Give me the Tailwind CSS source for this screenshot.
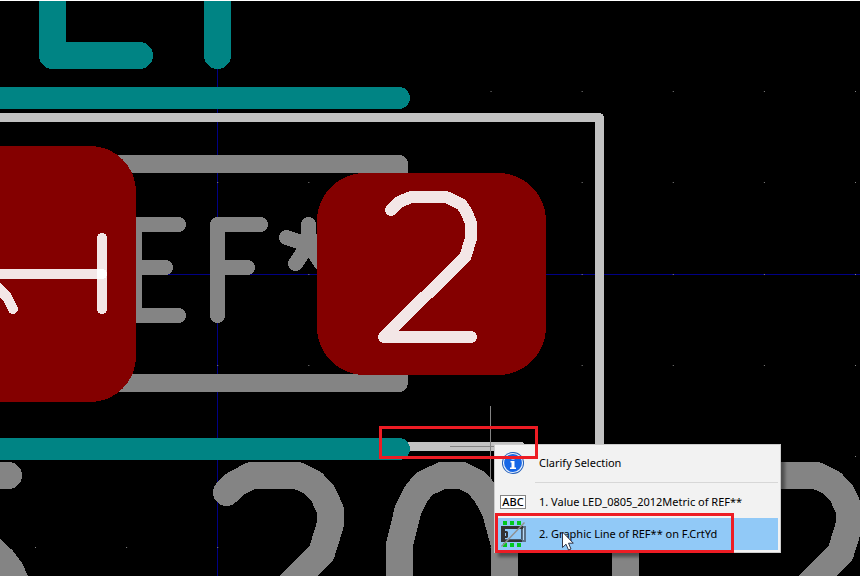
<!DOCTYPE html>
<html lang="en">
<head>
<meta charset="utf-8">
<meta name="viewport" content="width=device-width, initial-scale=1">
<title>Footprint Editor</title>
<script src="https://cdn.jsdelivr.net/npm/@tailwindcss/browser@4"></script>
</head>
<body class="min-h-screen bg-black">
<main class="relative min-h-screen overflow-hidden border-t border-white bg-black">
  <svg class="absolute -top-px left-0 h-[576px] w-[860px]" viewBox="0 0 860 576" fill="none" stroke-linecap="round" stroke-linejoin="round" shape-rendering="crispEdges" role="img" aria-label="LED_0805_2012Metric footprint, REF**, pads 1 and 2">
    <defs>
      <pattern id="grid" x="35" y="0" width="91.11" height="576" patternUnits="userSpaceOnUse">
        <path fill="#848484" d="M0 91h1v1h-1zM0 182h1v1h-1zM0 274h1v1h-1zM0 365h1v1h-1zM0 456h1v1h-1zM0 547h1v1h-1z"/>
      </pattern>
    </defs>
    <!-- Axes and grid -->
    <path stroke="#000084" d="M0 274.5H860M217.500 0V576"/>
    <rect width="860" height="576" fill="url(#grid)"/>
    <!-- Value text -->
    <g stroke="#848484" stroke-width="27">
      <path d="M-20 475.500H8.500M-10 548L3 560L11 571L17 585L22 600"/>
      <path id="two" d="M226.500 492.500L235 484L251.500 475.500H297.500L313 483L322.500 493L330.500 510V524L321.500 553L290 585"/>
      <path d="M399.500 600V545L408 510L416 494L424 484L442 475.500H462L477 483L486 494L495 510L504.500 545V600"/>
      <path d="M625.500 475V600"/>
      <use href="#two" x="519"/>
    </g>
    <!-- Fabrication outline and reference -->
    <path stroke="#848484" stroke-width="18" d="M0 164H399V383H0"/>
    <path stroke="#848484" stroke-width="15" d="M178.500 224.500H134.500V315.500H178.500M134.500 267.500H165.500M260.500 224.500H217.500V315.500M217.500 267.500H247.500M308.500 224.500V245L286.500 237.500M308.500 245L295.500 263.500M308.500 245L321.500 263.500M308.500 245L330 237.500"/>
    <!-- Courtyard -->
    <path stroke="#c2c2c2" stroke-width="9" d="M0 117.500H599.500V446.500M0 446.500H521"/>
    <!-- Silkscreen -->
    <path stroke="#008484" stroke-width="27" d="M52.500 -20V55.500H139.500M217.500 -20V55.500"/>
    <path stroke="#008484" stroke-width="22" d="M-20 98H399M-20 449H399"/>
    <!-- Pads -->
    <rect x="-100" y="146" width="236" height="256" rx="46" fill="#840000"/>
    <rect x="317" y="173" width="229" height="202" rx="48" fill="#840000"/>
    <g stroke="#fff" stroke-opacity=".9" stroke-width="10">
      <path d="M102 238V309"/><path d="M-10 274H102"/><path d="M-4 286L7 297L13 309"/>
      <path stroke-width="12" d="M391 210L399 202L411 197H446L461 204L466 211L471 223V238L465.500 256.500L384 337H471"/>
    </g>
    <path stroke="#848484" stroke-linecap="butt" d="M490.500 406V486M450 446.500H530"/>
    <path fill="#fff" d="M0 0H860V1H0z"/>
  </svg>

  <!-- Disambiguation menu -->
  <menu class="absolute top-[443px] left-[494px] flex w-[287px] flex-col border border-[#ccc] bg-[#f2f2f2] p-[2px] font-['Noto_Sans','Open_Sans',sans-serif] text-[11px] leading-4 text-black shadow-[4px_4px_3px_rgba(0,0,0,0.4)]">
    <li><button class="flex h-8 w-full items-center gap-[13px] text-left whitespace-nowrap">
      <svg class="ml-[3px] h-6 w-[26px] shrink-0" viewBox="0 0 26 24"><circle cx="13" cy="12" r="11" fill="#1d5bb8"/><circle cx="13" cy="12" r="9.500" fill="#1767e6" stroke="#e6eefb" stroke-width="1.200"/><path fill="#fff" d="M11.500 6h3v2.500h-3zM10.500 10h4v6.500h1.500V18h-6v-1.500h1.500v-5h-1z"/></svg>
      <span>Clarify Selection</span></button></li>
    <li role="separator" class="mb-[3px] ml-[38px] h-1 border-b border-[#d7d7d7]"></li>
    <li><button class="flex h-8 w-full items-center gap-[13px] text-left whitespace-nowrap">
      <svg class="ml-[3px] h-[14px] w-[26px] shrink-0" viewBox="0 0 26 14" aria-hidden="true"><rect x=".5" y=".5" width="25" height="13" fill="#fff" stroke="#858585"/><text x="13" y="11" text-anchor="middle" font-family="Noto Sans, sans-serif" font-size="11" font-weight="500" fill="#000">ABC</text></svg>
      <span>1. Value LED_0805_2012Metric of REF**</span></button></li>
    <li><button class="flex h-8 w-full items-center gap-[13px] bg-[#91c9f7] text-left whitespace-nowrap">
      <svg class="ml-[3px] size-[26px] shrink-0" viewBox="0 0 26 26" fill="none"><path fill="#00c81e" d="M3 0h4v4H3zM10 0h4v4h-4zM17 0h4v4h-4zM3 22h4v4H3zM10 22h4v4h-4zM17 22h4v4h-4z"/><path fill="#5b7186" d="M1 5h25v16H1z"/><path fill="#333" d="M1 5h22v3H5v11h17v2H1z"/><path fill="#91c9f7" d="M5 8h17v11H5z"/><path stroke="#46586a" d="M21.500 8v10.500H5"/><path stroke="#b8d9f3" d="M23.500 7v12"/><path fill="#333" d="M3 10h4l1 1v5l-1 1H3z"/><path fill="#91c9f7" d="M5 12h1v3H5z"/><path stroke="#909090" stroke-width="1.500" d="M1.500 25.500L24.500 1.500"/></svg>
      <span>2. Graphic Line of REF** on F.CrtYd</span></button></li>
  </menu>

  <!-- Callouts and pointer -->
  <div class="pointer-events-none absolute top-[425px] left-[379px] h-[33px] w-[159px] border-3 border-[#ed1c24]"></div>
  <div class="pointer-events-none absolute top-[512px] left-[495px] h-10 w-[239px] border-3 border-[#ed1c24]"></div>
  <svg class="pointer-events-none absolute top-[530px] left-[562px] h-5 w-3" viewBox="0 0 12 20"><path fill="#fff" stroke="#223" stroke-width=".9" d="M.5 1V16.500L4 13.200L6.500 19L9 18L6.500 12.200H11.300z"/></svg>
</main>
</body>
</html>
